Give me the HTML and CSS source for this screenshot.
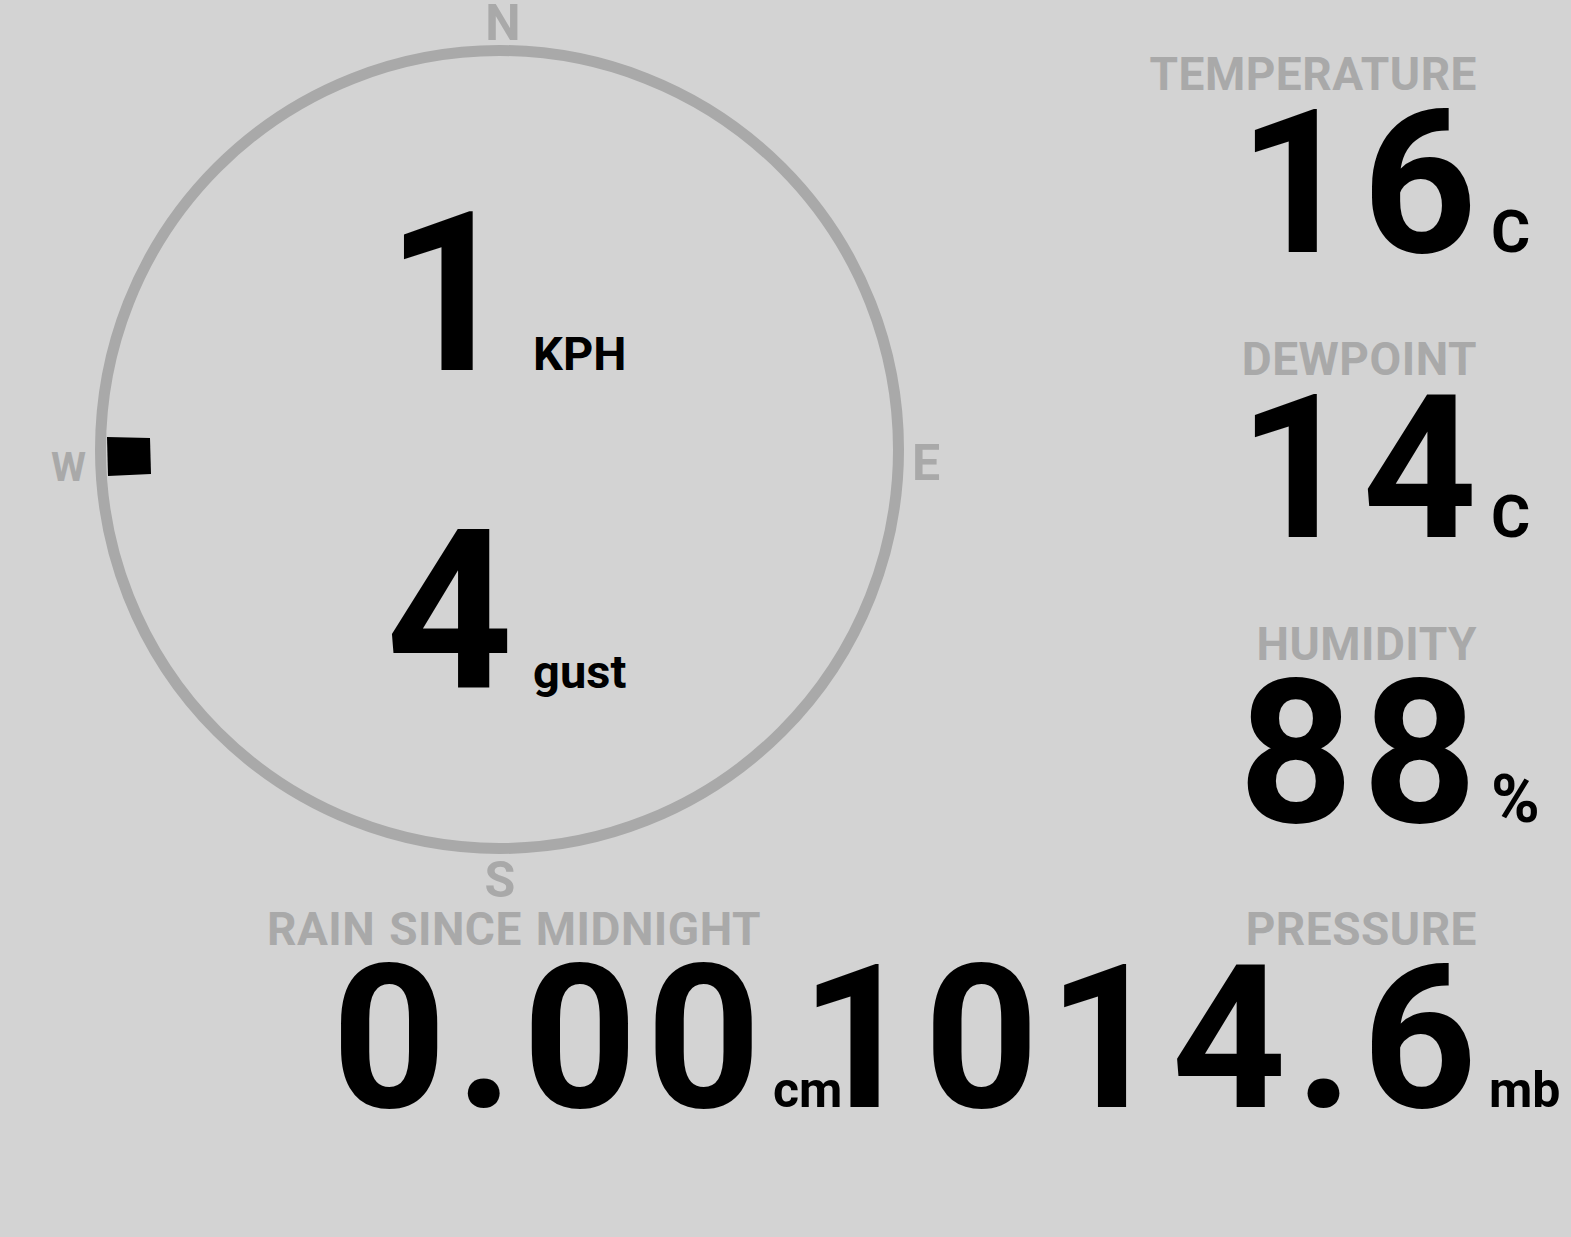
FILE: index.html
```html
<!DOCTYPE html>
<html lang="en">
<head>
<meta charset="utf-8">
<title>Weather</title>
<link rel="stylesheet" href="styles.css">
</head>
<body>
<main class="board">
  <section class="compass">
    <svg class="dial" width="1000" height="906" viewBox="0 0 1000 906" aria-hidden="true">
      <circle cx="499.5" cy="449.5" r="399" fill="none" stroke="#a9a9a9" stroke-width="11"/>
      <text class="cardinal" x="503" y="40" text-anchor="middle">N</text>
      <text class="cardinal small" x="51" y="481">W</text>
      <text class="cardinal" x="912" y="480">E</text>
      <text class="cardinal" x="500" y="897" text-anchor="middle">S</text>
      <polygon points="107,437 150,438 151,474 108,476" fill="#000"/>
    </svg>
    <div class="wind">
      <div class="wind-row"><span class="wind-num">1</span><span class="wind-unit">KPH</span></div>
      <div class="wind-row"><span class="wind-num">4</span><span class="wind-unit">gust</span></div>
    </div>
  </section>

  <section class="reading r-temp">
    <div class="label">TEMPERATURE</div>
    <div class="num">16</div>
    <div class="unit">C</div>
  </section>

  <section class="reading r-dew">
    <div class="label">DEWPOINT</div>
    <div class="num">14</div>
    <div class="unit">C</div>
  </section>

  <section class="reading r-hum">
    <div class="label">HUMIDITY</div>
    <div class="num">88</div>
    <div class="unit unit-pct">%</div>
  </section>

  <section class="reading r-rain">
    <div class="label">RAIN SINCE MIDNIGHT</div>
    <div class="num">0.00</div>
    <div class="unit unit-sm">cm</div>
  </section>

  <section class="reading r-press">
    <div class="label">PRESSURE</div>
    <div class="num">1014.6</div>
    <div class="unit unit-sm">mb</div>
  </section>
</main>
</body>
</html>
```
FILE: styles.css
```css
* { box-sizing: border-box; }

html, body {
  margin: 0;
  padding: 0;
  background: #d3d3d3;
}

body {
  font-family: Roboto, "Liberation Sans", sans-serif;
  font-weight: 700;
  color: #000;
  width: 1571px;
  height: 1237px;
  overflow: hidden;
}

.board {
  display: grid;
  grid-template-columns: 844px minmax(0, 1fr);
  grid-template-rows: 51px 285px 285px 285px auto;
  padding-right: 11px;
}

/* ---------- compass ---------- */
.compass {
  grid-column: 1;
  grid-row: 1 / 5;
  position: relative;
  width: 1000px;
  height: 906px;
}

.dial {
  position: absolute;
  top: 0;
  left: 0;
  overflow: visible;
}

.cardinal {
  font-family: Roboto, "Liberation Sans", sans-serif;
  font-weight: 700;
  font-size: 50px;
  fill: #a9a9a9;
}

.cardinal.small {
  font-size: 40px;
}

.wind {
  position: relative;
  padding-top: 135px;
  padding-left: 12px;
  display: flex;
  flex-direction: column;
}

.wind-row {
  display: flex;
  align-items: baseline;
  justify-content: center;
  height: 318px;
  line-height: 318px;
}

.wind-num {
  font-size: 222px;
}

.wind-unit {
  font-size: 47px;
  line-height: 47px;
  margin-left: 20px;
}

/* ---------- readings ---------- */
.reading {
  display: grid;
  grid-template-columns: auto 83px;
  align-self: start;
  justify-self: unsafe end;
}

.r-temp  { grid-column: 2; grid-row: 2; }
.r-dew   { grid-column: 2; grid-row: 3; }
.r-hum   { grid-column: 2; grid-row: 4; }
.r-press { grid-column: 2; grid-row: 5; }
.r-rain  { grid-column: 1; grid-row: 5; }

.label {
  grid-column: 1;
  grid-row: 1;
  justify-self: end;
  font-size: 46px;
  line-height: 46px;
  color: #a9a9a9;
  white-space: nowrap;
  letter-spacing: 0.5px;
  word-spacing: 2px;
}

.num {
  grid-column: 1;
  grid-row: 2;
  justify-self: end;
  font-size: 200px;
  line-height: 173px;
  letter-spacing: 9px;
  margin-right: -9px;
  white-space: nowrap;
  align-self: baseline;
}

.unit {
  grid-column: 2;
  grid-row: 2;
  padding-left: 14px;
  font-size: 60px;
  line-height: 60px;
  align-self: baseline;
  white-space: nowrap;
}

.unit-pct {
  font-size: 66px;
  line-height: 66px;
}

.unit-sm {
  font-size: 50px;
  line-height: 50px;
  padding-left: 12px;
}
```
